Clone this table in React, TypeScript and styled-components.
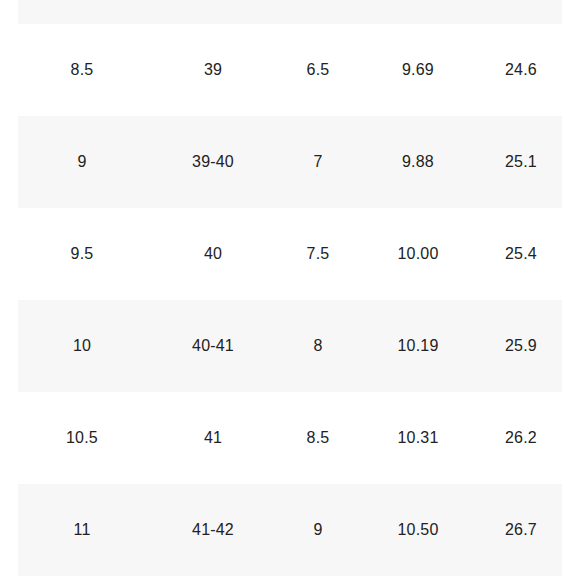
import React from 'react';
import styled, { createGlobalStyle } from 'styled-components';

const GlobalStyle = createGlobalStyle`
  html, body {
    margin: 0;
    padding: 0;
    background: #ffffff;
    overflow: hidden;
  }
  body {
    font-family: "Liberation Sans", Arial, sans-serif;
    color: #222222;
  }
`;

const Page = styled.div`
  padding: 0 18px;
  height: 580px;
  overflow: hidden;
`;

// the chart is scrolled, so only the bottom of the row above 8.5 shows
const SizeTable = styled.table`
  width: 544px;
  margin-top: -68px;
  border-collapse: collapse;
  table-layout: fixed;
`;

const Row = styled.tr<{ $shaded: boolean }>`
  height: 92px;
  background: ${(p) => (p.$shaded ? '#f7f7f7' : '#ffffff')};
`;

const Cell = styled.td`
  padding: 0;
  text-align: center;
  vertical-align: middle;
  font-size: 16px;
  line-height: 20px;
  letter-spacing: 0.2px;
  color: #222222;
`;

const columnWidths = [128, 134, 76, 124, 82];

const rows = [
  ['', '', '', '', ''],
  ['8.5', '39', '6.5', '9.69', '24.6'],
  ['9', '39-40', '7', '9.88', '25.1'],
  ['9.5', '40', '7.5', '10.00', '25.4'],
  ['10', '40-41', '8', '10.19', '25.9'],
  ['10.5', '41', '8.5', '10.31', '26.2'],
  ['11', '41-42', '9', '10.50', '26.7'],
];

export default function App() {
  return (
    <>
      <GlobalStyle />
      <Page>
        <SizeTable>
          <colgroup>
            {columnWidths.map((w, i) => (
              <col key={i} style={{ width: w }} />
            ))}
          </colgroup>
          <tbody>
            {rows.map((r, i) => (
              <Row key={i} $shaded={i % 2 === 0}>
                {r.map((v, j) => (
                  <Cell key={j}>{v}</Cell>
                ))}
              </Row>
            ))}
          </tbody>
        </SizeTable>
      </Page>
    </>
  );
}
